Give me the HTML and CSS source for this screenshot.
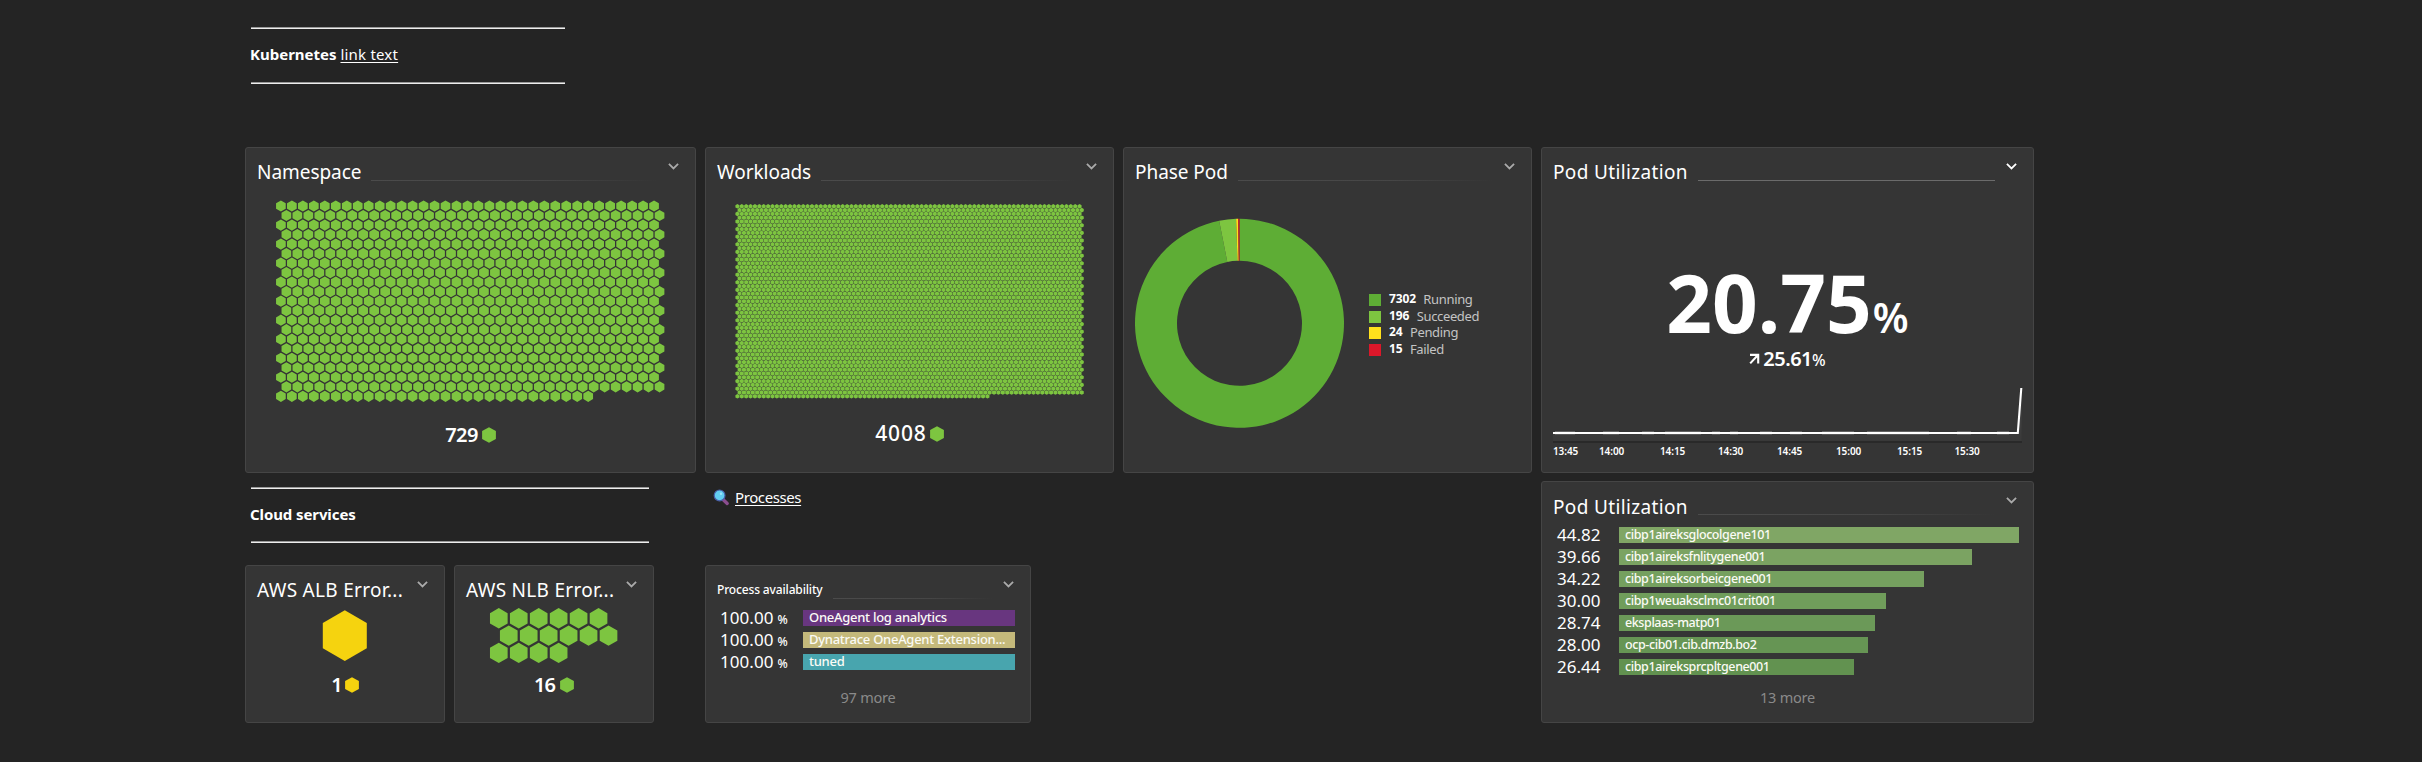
FILE: index.html
```html
<!DOCTYPE html>
<html lang="en">
<head>
<meta charset="utf-8">
<title>Kubernetes dashboard</title>
<link rel="stylesheet" href="styles.css">
</head>
<body>
<svg class="defs" aria-hidden="true">
  <symbol id="chevron" viewBox="0 0 11 7"><path d="M0.9 0.9 5.5 5.4 10.1 0.9" fill="none" stroke="currentColor" stroke-width="1.8"/></symbol>
  <symbol id="hex" viewBox="0 0 14 16"><path d="M7 0.2 13.9 4.1V11.9L7 15.8 0.1 11.9V4.1Z" fill="currentColor"/></symbol>
</svg>

<header class="tile-head markdown">
  <hr>
  <p><strong>Kubernetes</strong> <a href="#" class="wide-link">link text</a></p>
  <hr>
</header>

<main class="dashboard">
  <section class="col col-left">
    <article class="card tall">
      <div class="card-head"><h2>Namespace</h2><i class="rule"></i><svg class="chev"><use href="#chevron"/></svg></div>
      <svg class="hexmap" width="449" height="238" data-count="729" data-cols="35" data-x="34.9" data-y="22" data-pitch="10.975" data-rowpitch="9.515" data-r="5.6"></svg>
      <div class="counter ok"><span class="n3">729</span><svg class="hexicon"><use href="#hex"/></svg></div>
    </article>
    <div class="markdown cloud">
      <hr>
      <p><strong class="cloud-title">Cloud services</strong></p>
      <hr>
    </div>
    <div class="row">
      <article class="card small">
        <div class="card-head"><h2 class="aws">AWS ALB Error...</h2><svg class="chev"><use href="#chevron"/></svg></div>
        <svg class="hexmap warn" width="198" height="70" data-count="1" data-cols="1" data-x="98.8" data-y="33.6" data-pitch="50" data-rowpitch="43" data-r="25.4"></svg>
        <div class="counter warn"><span class="n1">1</span><svg class="hexicon"><use href="#hex"/></svg></div>
      </article>
      <article class="card small">
        <div class="card-head"><h2 class="aws">AWS NLB Error...</h2><svg class="chev"><use href="#chevron"/></svg></div>
        <svg class="hexmap" width="198" height="70" data-count="16" data-cols="6" data-x="43.8" data-y="16.3" data-pitch="19.95" data-rowpitch="17.3" data-r="10.2"></svg>
        <div class="counter ok"><span class="n2">16</span><svg class="hexicon"><use href="#hex"/></svg></div>
      </article>
    </div>
  </section>

  <section class="col col-mid">
    <div class="row">
      <article class="card tall mid">
        <div class="card-head"><h2>Workloads</h2><i class="rule"></i><svg class="chev"><use href="#chevron"/></svg></div>
        <svg class="hexmap" width="407" height="237" data-count="4008" data-cols="79" data-x="31.4" data-y="22.3" data-pitch="4.387" data-rowpitch="3.8" data-r="2.3"></svg>
        <div class="counter ok"><span class="n4">4008</span><svg class="hexicon"><use href="#hex"/></svg></div>
      </article>
      <article class="card tall mid">
        <div class="card-head"><h2>Phase Pod</h2><i class="rule"></i><svg class="chev"><use href="#chevron"/></svg></div>
        <div class="phase">
          <svg class="donut" width="245" height="285"></svg>
          <ul class="legend">
            <li><i class="sw running"></i><b>7302</b><span>Running</span></li>
            <li><i class="sw succeeded"></i><b>196</b><span>Succeeded</span></li>
            <li><i class="sw pending"></i><b>24</b><span>Pending</span></li>
            <li><i class="sw failed"></i><b>15</b><span>Failed</span></li>
          </ul>
        </div>
      </article>
    </div>
    <p class="processes">
      <svg width="17" height="17" viewBox="0 0 17 17"><path d="M9.5 10 14.2 14.4" stroke="#8a4d8f" stroke-width="3.4" stroke-linecap="round"/><circle cx="6.6" cy="6.4" r="5.4" fill="#62cdf0" stroke="#4a5fa8" stroke-width="1.2"/><circle cx="8" cy="4.8" r="1.2" fill="#9be4fb"/></svg>
      <a href="#">Processes</a>
    </p>
    <article class="card small proc">
      <div class="card-head"><h2 class="sm">Process availability</h2><i class="rule"></i><svg class="chev"><use href="#chevron"/></svg></div>
      <ul class="toplist">
        <li><span class="val">100.00<small>%</small></span><span class="bar purple">OneAgent log analytics</span></li>
        <li><span class="val">100.00<small>%</small></span><span class="bar sand">Dynatrace OneAgent Extension...</span></li>
        <li><span class="val">100.00<small>%</small></span><span class="bar teal">tuned</span></li>
      </ul>
      <p class="more">97 more</p>
    </article>
  </section>

  <section class="col col-right">
    <article class="card tall hover">
      <div class="card-head"><h2 class="util">Pod Utilization</h2><i class="rule"></i><svg class="chev"><use href="#chevron"/></svg></div>
      <div class="big"><span>20.75</span><small>%</small></div>
      <div class="trend">
        <svg width="11" height="12" viewBox="0 0 11 12"><path d="M1 1.9H9.2V10.6M9 2 1.2 10.4" fill="none" stroke="#fff" stroke-width="2.1"/></svg>
        <span>25.61</span><small>%</small>
      </div>
      <svg class="spark" width="491" height="98">
        <defs><linearGradient id="fade" x1="0" y1="0" x2="0" y2="1"><stop offset="0" stop-color="#fff" stop-opacity=".09"/><stop offset="1" stop-color="#fff" stop-opacity=".02"/></linearGradient></defs>
        <path d="M11 63H476L479.5 30V71H11Z" fill="url(#fade)"/>
        <path d="M11 72H480" stroke="#292929" stroke-width="2"/>
        <path d="M13 62.8h20M61 62.8h16M100 62.8h12M123 62.8h36M170 62.8h8M188 62.8h8M218 62.8h12M248 62.8h12M280 62.8h32M325 62.8h62M415 62.8h14M455 62.8h12" stroke="#fff" stroke-opacity=".3" stroke-width="3.2"/>
        <path d="M11 63H475.8L479.3 18" fill="none" stroke="#fff" stroke-width="2.1"/>
        <g class="ticks">
          <text x="11" y="85">13:45</text><text x="57" y="85">14:00</text><text x="118" y="85">14:15</text><text x="176" y="85">14:30</text>
          <text x="235" y="85">14:45</text><text x="294" y="85">15:00</text><text x="355" y="85">15:15</text><text x="412.5" y="85">15:30</text>
        </g>
      </svg>
    </article>
    <article class="card pods">
      <div class="card-head"><h2 class="util">Pod Utilization</h2><i class="rule"></i><svg class="chev"><use href="#chevron"/></svg></div>
      <ul class="toplist">
        <li><span class="val">44.82</span><span class="bar g1" style="width:400px">cibp1aireksglocolgene101</span></li>
        <li><span class="val">39.66</span><span class="bar g2" style="width:353px">cibp1aireksfnlitygene001</span></li>
        <li><span class="val">34.22</span><span class="bar g3" style="width:305px">cibp1aireksorbeicgene001</span></li>
        <li><span class="val">30.00</span><span class="bar g4" style="width:267px">cibp1weuaksclmc01crit001</span></li>
        <li><span class="val">28.74</span><span class="bar g5" style="width:256px">eksplaas-matp01</span></li>
        <li><span class="val">28.00</span><span class="bar g6" style="width:249px">ocp-cib01.cib.dmzb.bo2</span></li>
        <li><span class="val">26.44</span><span class="bar g7" style="width:235px">cibp1aireksprcpltgene001</span></li>
      </ul>
      <p class="more">13 more</p>
    </article>
  </section>
</main>
<script src="charts.js"></script>
</body>
</html>
```
FILE: styles.css
```css
* { box-sizing: border-box; }
body {
  margin: 0;
  min-height: 762px;
  background: #242424;
  color: #fff;
  font-family: "Noto Sans", "Open Sans", sans-serif;
  overflow: hidden;
}
p, h2, ul { margin: 0; padding: 0; list-style: none; }
a { color: inherit; text-decoration: underline 1px; text-underline-offset: 1.5px; text-decoration-skip-ink: none; }
svg { display: block; flex: none; }
.defs { position: absolute; width: 0; height: 0; }

/* Markdown tiles */
.markdown hr { margin: 0; height: 2px; border: 0; border-top: 1px solid #999; border-bottom: 1px solid #eee; }
.markdown p, .processes { font-size: 15px; line-height: 20px; }
.markdown p { margin: 15px 0 18px; }
.markdown strong { margin-left: -1px; }
.wide-link { letter-spacing: .2px; }
.tile-head { height: 147px; width: 565px; padding: 27px 0 0 251px; }
.cloud { height: 92px; width: 404px; padding: 14px 0 0 6px; }
.cloud p { margin-bottom: 17px; }
.cloud-title { letter-spacing: -.1px; }

/* Grid */
.dashboard { display: grid; grid-template-columns: 451px 827px 493px; gap: 9px; padding-left: 245px; }
.row { display: flex; gap: 9px; }
.card { border: 1px solid #454545; border-radius: 3px; background: #353535; overflow: hidden; }
.tall { height: 326px; }
.mid { width: 409px; }
.small { width: 200px; height: 158px; }
.proc { width: 326px; }
.pods { height: 242px; margin-top: 8px; }

/* Card header */
.card-head { display: flex; height: 36px; padding: 12px 16px 0 11px; }
.card-head h2 { font-size: 19px; font-weight: 400; line-height: 24px; white-space: nowrap; letter-spacing: -.05px; }
.card-head h2.util { letter-spacing: .35px; }
.card-head h2.aws { letter-spacing: .3px; }
.card-head h2.sm { font-size: 12px; font-weight: 500; letter-spacing: -.15px; }
.pods h2 { margin-top: 1px; }
.rule { flex: 1; height: 1px; margin: 20px 11px 0 10px; background: linear-gradient(90deg, #4b4b4b, #464646 60%, #353535); }
.chev { width: 11px; height: 7px; margin: 3px 0 0 auto; color: #aaa; }
.hover .rule { background: #6b6b6b; }
.hover .chev { color: #fff; }

/* Honeycombs */
.hexmap { fill: #7dc540; }
.hexmap.warn { fill: #f5d30f; }
.counter { display: flex; justify-content: center; align-items: center; gap: 4px; height: 25px; font-size: 20px; font-weight: 600; line-height: 25px; }
.counter.ok svg { color: #7dc540; }
.counter.warn svg { color: #f5d30f; }
.hexicon { width: 14px; height: 16px; }
.n1 { margin-right: -2px; }
.n2 { letter-spacing: -.8px; margin-right: .8px; }
.n3 { letter-spacing: -.6px; }
.n4 { font-size: 21px; font-weight: 500; letter-spacing: .8px; margin-right: -.8px; }

/* Phase pod */
.phase { display: flex; }
.legend { padding-top: 108px; }
.legend li { display: flex; align-items: center; height: 16.5px; font-size: 13px; line-height: 16px; color: #c4c4c4; }
.legend b { margin: -2px 7.5px 0 8px; font-size: 12px; letter-spacing: -.15px; color: #fff; }
.legend span { margin-top: -2px; letter-spacing: -.35px; }
.sw { width: 12px; height: 12px; }
.running { background: #5ead35; }
.succeeded { background: #7dc540; }
.pending { background: #ffe11c; }
.failed { background: #dc172a; }

/* Links row */
.processes { display: flex; gap: 5px; height: 92px; padding: 14px 0 0 8px; }
.processes svg { margin-top: 2px; }
.processes a { height: 20px; letter-spacing: -.4px; }

/* Top lists */
.toplist { padding: 9px 0 0 15px; }
.proc .toplist { padding-top: 8px; }
.toplist li { display: flex; height: 16px; margin-bottom: 6px; }
.val { width: 62px; font-size: 17px; line-height: 16px; }
.val small { margin-left: 4px; font-size: 12px; font-weight: 500; }
.proc .val { width: 82px; letter-spacing: .05px; text-indent: -1px; }
.bar { padding-left: 6px; font-size: 12.5px; font-weight: 500; line-height: 15px; letter-spacing: -.4px; white-space: nowrap; color: #fbfbf5; }
.proc .bar { width: 212px; font-size: 13px; letter-spacing: -.27px; }
.purple { background: #68367f; }
.sand { background: #c4b97b; }
.teal { background: #48a5ae; }
.g1 { background: #80a665; }
.g2 { background: #7ba362; }
.g3 { background: #75a05f; }
.g4 { background: #709d5b; }
.g5 { background: #6b9958; }
.g6 { background: #669554; }
.g7 { background: #629250; }
.more { margin-top: 12px; text-align: center; font-size: 14.5px; line-height: 20px; letter-spacing: -.2px; color: #8a8a8a; }
.proc .more { margin-top: 17px; }

/* Single value */
.big { display: flex; justify-content: center; align-items: baseline; gap: 1px; height: 80px; margin-top: 78px; font-size: 80px; font-weight: 700; line-height: 80px; }
.big small { font-size: 41px; font-weight: 600; line-height: 41px; }
.trend { display: flex; justify-content: center; align-items: baseline; height: 24px; margin: 5px 0 -1px; font-size: 20px; font-weight: 600; line-height: 24px; }
.trend svg { align-self: flex-start; margin: 6px 3px 0 0; }
.trend span { letter-spacing: -.5px; }
.trend small { font-size: 16px; font-weight: 500; line-height: 20px; }
.ticks { fill: #fff; font-size: 10px; font-weight: 600; letter-spacing: -.1px; }
```
FILE: charts.js
```js
const NS = 'http://www.w3.org/2000/svg';

function addPath(svg, d, fill) {
  const path = document.createElementNS(NS, 'path');
  path.setAttribute('d', d);
  if (fill) path.setAttribute('fill', fill);
  svg.appendChild(path);
}

// Honeycomb: odd rows are shifted right by half a cell.
document.querySelectorAll('.hexmap').forEach(svg => {
  const { count, cols, x, y, pitch, rowpitch, r } = Object.fromEntries(
    Object.entries(svg.dataset).map(([k, v]) => [k, Number(v)])
  );
  let d = '';
  for (let i = 0; i < count; i++) {
    const row = Math.floor(i / cols);
    const cx = x + (i % cols) * pitch + (row % 2 ? pitch / 2 : 0);
    const cy = y + row * rowpitch;
    const w = r * 0.866;
    d += `M${cx} ${cy - r}l${w} ${r / 2}v${r}l${-w} ${r / 2}l${-w} ${-r / 2}v${-r}Z`;
  }
  addPath(svg, d);
});

// Donut segments, clockwise from the top.
const donut = document.querySelector('.donut');
const phases = [[7302, '#5ead35'], [196, '#7dc540'], [24, '#ffe11c'], [15, '#dc172a']];
const total = phases.reduce((sum, [n]) => sum + n, 0);
const cx = 115.5, cy = 139.3, outer = 104.5, inner = 62.5;
const point = (radius, a) => `${cx + radius * Math.sin(a)} ${cy - radius * Math.cos(a)}`;
let angle = 0;
for (const [n, color] of phases) {
  const end = angle + (n / total) * Math.PI * 2;
  const large = end - angle > Math.PI ? 1 : 0;
  addPath(donut, `M${point(outer, angle)}A${outer} ${outer} 0 ${large} 1 ${point(outer, end)}L${point(inner, end)}A${inner} ${inner} 0 ${large} 0 ${point(inner, angle)}Z`, color);
  angle = end;
}
```
